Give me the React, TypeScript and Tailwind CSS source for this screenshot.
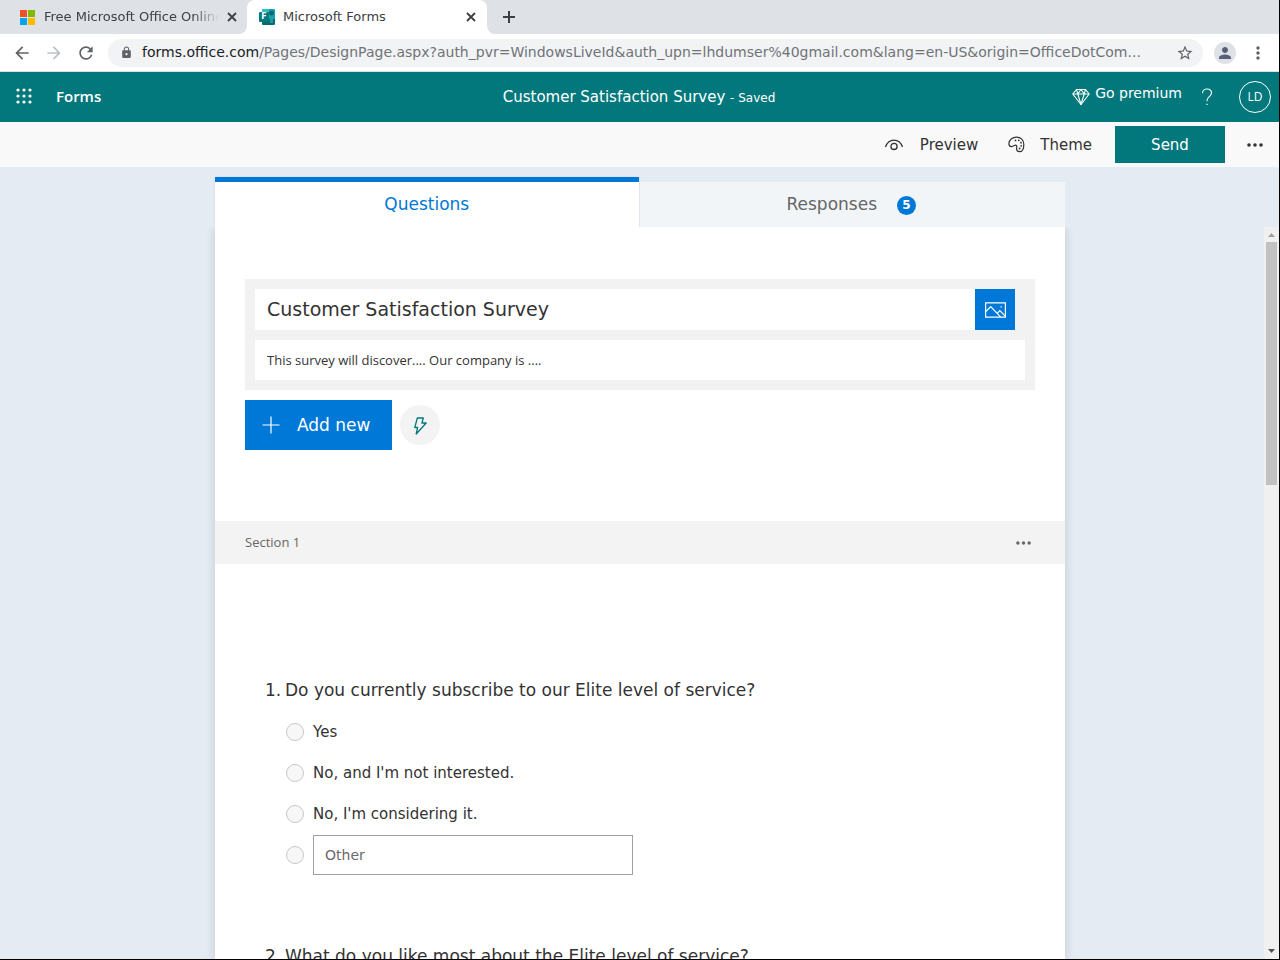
import React from "react";
import {
	MdArrowBack,
	MdArrowForward,
	MdLock,
	MdMoreVert,
	MdPerson,
	MdRefresh,
	MdStarBorder,
} from "react-icons/md";

const MicrosoftLogo = () => (
	<svg width="15" height="15" viewBox="0 0 15 15" className="shrink-0">
		<path fill="#f25022" d="M0 0h7v7H0z" />
		<path fill="#7fba00" d="M8 0h7v7H8z" />
		<path fill="#00a4ef" d="M0 8h7v7H0z" />
		<path fill="#ffb900" d="M8 8h7v7H8z" />
	</svg>
);

const FormsLogo = () => (
	<div className="relative h-4 w-4 shrink-0">
		<svg width="16" height="16" viewBox="0 0 16 16">
			<path fill="#14a5ab" d="M3 0h12a1 1 0 0 1 1 1v9H3z" />
			<path fill="#0b6a70" d="M3 10h13v5a1 1 0 0 1-1 1H4a1 1 0 0 1-1-1z" />
			<path fill="#32bec1" d="M3 0h7v4H3z" />
			<circle cx="12.5" cy="4" r="2.5" fill="#036c70" />
			<path fill="#1b9da2" d="M11 10h3v4h-3z" />
			<rect x="0" y="3" width="10" height="10" rx="1" fill="#047a80" />
		</svg>
		<span className="absolute top-[3px] left-0 w-[10px] text-center text-[8px] leading-[10px] font-bold text-white">F</span>
	</div>
);

const CloseIcon = () => (
	<svg width="14" height="14" viewBox="0 0 14 14" stroke="currentColor" strokeWidth="1.8">
		<path d="M3 3l8 8M11 3l-8 8" />
	</svg>
);

const NewTabIcon = () => (
	<svg width="20" height="20" viewBox="0 0 20 20" stroke="currentColor" strokeWidth="2">
		<path d="M10 4v12M4 10h12" />
	</svg>
);

const WaffleIcon = () => (
	<svg width="16" height="16" viewBox="0 0 16 16" fill="currentColor">
		{[2, 8, 14].map((y) => [2, 8, 14].map((x) => <circle key={`${x}-${y}`} cx={x} cy={y} r="1.6" />))}
	</svg>
);

const DiamondIcon = () => (
	<svg width="18" height="18" viewBox="0 0 18 18" fill="none" stroke="currentColor" strokeWidth="1.1" strokeLinejoin="round">
		<path d="M4.5 1.5h9l3.7 4.5L9 16.5.8 6z" />
		<path d="M.8 6h16.4M4.5 1.5 5.8 6 9 16.5 12.2 6l1.3-4.500M9 1.5 5.8 6M9 1.5 12.2 6" />
	</svg>
);

const HelpIcon = () => (
	<svg width="12" height="18" viewBox="0 0 12 18" fill="none" stroke="currentColor" strokeWidth="1.1">
		<path d="M1.5 5.2C1.5 2.6 3.4 1 6 1s4.5 1.6 4.5 4.1c0 3.2-4.5 4-4.5 7.4v.8" />
		<path d="M5.4 15.8h1.2v1.2H5.4z" fill="currentColor" stroke="none" />
	</svg>
);

const EyeIcon = () => (
	<svg width="20" height="12" viewBox="0 0 20 12" fill="none" stroke="currentColor" strokeWidth="1.3">
		<path d="M1.500 8C3 4 6 1.2 10 1.2S17 4 18.500 8" />
		<circle cx="10" cy="7.4" r="3.1" />
	</svg>
);

const PaletteIcon = () => (
	<svg width="17" height="17" viewBox="0 0 17 17" fill="none" stroke="currentColor" strokeWidth="1.2">
		<path d="M8.6 1.1c4.2 0 7.2 3 7.2 7.3 0 4.4-1.8 7.3-4.3 7.3-1.7 0-2.9-1-2.9-2.7 0-1.3.3-2.2.1-3-.3-.9-1.4-1.1-2.4-.5-1.1.7-1.8 1.200-3 1.100C1.600 10.400.9 9.300.9 7.700.9 4 4.400 1.100 8.600 1.100z" />
		<g fill="currentColor" stroke="none">
			<circle cx="7.5" cy="4.4" r=".9" />
			<circle cx="10.8" cy="4.3" r=".9" />
			<circle cx="13" cy="6.7" r=".9" />
			<circle cx="13.2" cy="9.8" r=".9" />
			<circle cx="11.6" cy="12.5" r=".9" />
		</g>
	</svg>
);

const PictureIcon = () => (
	<svg width="21" height="16" viewBox="0 0 21 16" fill="none" stroke="currentColor" strokeWidth="1.2">
		<path d="M.6.9h19.800v14.200H.6z" />
		<path d="M.8 9.500 5.700 4.600l9.800 10.200M12.300 11.400l2.500-2.800 5.500 5.600" />
		<path d="M15.500 4.200h1.300v1.200h-1.300z" fill="currentColor" stroke="none" />
	</svg>
);

const BoltIcon = () => (
	<svg width="14" height="19" viewBox="0 0 14 19" fill="none" stroke="currentColor" strokeWidth="1.3" strokeLinejoin="round">
		<path d="M4.300 2h6L8.900 7h4.300L3.200 18l1.400-6.500H1.800z" />
	</svg>
);

const PlusIcon = () => (
	<svg width="18" height="18" viewBox="0 0 18 18" stroke="currentColor" strokeWidth="1.2">
		<path d="M9 .5v17M.5 9h17" />
	</svg>
);

const DotsIcon = ({ width }: { width: number }) => (
	<svg width={width} height="4" viewBox="0 0 16 4" fill="currentColor">
		<circle cx="2" cy="2" r="1.8" />
		<circle cx="8" cy="2" r="1.8" />
		<circle cx="14" cy="2" r="1.8" />
	</svg>
);

function BrowserChrome() {
	return (
		<div className="shrink-0">
			<div className="flex h-[34px] bg-[#dee1e6] text-[13px] text-[#3c4043]">
				<div className="flex w-[247px] items-center pr-2 pl-5">
					<MicrosoftLogo />
					<span className="ml-[9px] w-[175px] overflow-hidden whitespace-nowrap [mask-image:linear-gradient(to_right,black_85%,transparent)]">
						Free Microsoft Office Online
					</span>
					<button aria-label="Close tab" className="ml-1.5">
						<CloseIcon />
					</button>
				</div>
				<div className="relative flex w-[240px] items-center rounded-t-lg bg-white pr-[9px] pl-3">
					<svg width="8" height="8" className="absolute bottom-0 -left-2" fill="white">
						<path d="M8 0v8H0a8 8 0 0 0 8-8z" />
					</svg>
					<svg width="8" height="8" className="absolute -right-2 bottom-0" fill="white">
						<path d="M0 0v8h8a8 8 0 0 1-8-8z" />
					</svg>
					<FormsLogo />
					<span className="ml-2 flex-1">Microsoft Forms</span>
					<button aria-label="Close tab">
						<CloseIcon />
					</button>
				</div>
				<button aria-label="New tab" className="ml-3">
					<NewTabIcon />
				</button>
			</div>
			<div className="flex h-[38px] items-center border-b border-[#dcdee2] bg-white px-3 text-[#5f6368]">
				<button aria-label="Back"><MdArrowBack size={20} /></button>
				<button aria-label="Forward" className="ml-3 text-[#bdc1c6]"><MdArrowForward size={20} /></button>
				<button aria-label="Reload" className="ml-3"><MdRefresh size={20} /></button>
				<div className="ml-3 flex h-7 min-w-0 flex-1 items-center rounded-full bg-[#f1f3f4] pr-[9px] pl-3">
					<MdLock size={13} className="shrink-0" />
					<p className="ml-[9px] min-w-0 flex-1 overflow-hidden text-[14px] text-ellipsis whitespace-nowrap text-[#707478]">
						<span className="text-[#202124]">forms.office.com</span>
						/Pages/DesignPage.aspx?auth_pvr=WindowsLiveId&amp;auth_upn=lhdumser%40gmail.com&amp;lang=en-US&amp;origin=OfficeDotCom...
					</p>
					<button aria-label="Bookmark"><MdStarBorder size={18} /></button>
				</div>
				<button aria-label="Profile" className="ml-[11px] flex h-[22px] w-[22px] items-center justify-center rounded-full bg-[#dee1e6] text-[#56607a]">
					<MdPerson size={18} />
				</button>
				<button aria-label="Browser menu" className="ml-3"><MdMoreVert size={20} /></button>
			</div>
		</div>
	);
}

function AppHeader() {
	return (
		<header className="grid h-[50px] shrink-0 grid-cols-[1fr_auto_1fr] items-center bg-[#03787c] text-[15px] text-white">
			<div className="flex items-center pb-0.5 pl-4">
				<button aria-label="App launcher"><WaffleIcon /></button>
				<a href="#" className="ml-6 font-['Open_Sans',sans-serif] font-semibold">Forms</a>
			</div>
			<p className="pr-0.5 whitespace-nowrap">
				Customer Satisfaction Survey <span className="text-[12px]">- Saved</span>
			</p>
			<div className="flex items-center justify-end pr-[9px]">
				<button className="flex items-center gap-[5px] text-[14px]">
					<DiamondIcon />
					<span className="pb-2">Go premium</span>
				</button>
				<button aria-label="Help" className="ml-[19px]"><HelpIcon /></button>
				<button className="ml-[26px] h-8 w-8 rounded-full border border-white font-['Open_Sans',sans-serif] text-[12px]">LD</button>
			</div>
		</header>
	);
}

function CommandBar() {
	return (
		<div className="flex h-[45px] shrink-0 items-center justify-end bg-[#f9f9f9] pr-[17px] text-[15px] text-[#333]">
			<button className="flex items-center gap-4">
				<EyeIcon />
				<span className="pt-0.5">Preview</span>
			</button>
			<button className="ml-[30px] flex items-center gap-[15px]">
				<PaletteIcon />
				<span className="pt-0.5">Theme</span>
			</button>
			<button className="ml-[23px] h-[37px] w-[110px] bg-[#03787c] pt-0.5 text-white">Send</button>
			<button aria-label="More options" className="ml-[22px]"><DotsIcon width={16} /></button>
		</div>
	);
}

interface QuestionProps {
	number: number;
	title: string;
	options?: string[];
}

function Question({ number, title, options = [] }: QuestionProps) {
	const name = `question-${number}`;
	return (
		<fieldset>
			<legend className="flex text-[17px] leading-6">
				<span className="w-5">{number}.</span>
				{title}
			</legend>
			{options.length > 0 && (
				<div className="mt-[10px] ml-[21px] grid gap-px text-[15px]">
					{options.map((option) => (
						<label key={option} className="flex h-10 items-center gap-[9px]">
							<input type="radio" name={name} className="h-[18px] w-[18px] appearance-none rounded-full border border-[#c8c8c8] bg-[#f7f7f7]" />
							{option}
						</label>
					))}
					<div className="flex h-10 items-center gap-[9px]">
						<input type="radio" name={name} aria-label="Other" className="h-[18px] w-[18px] appearance-none rounded-full border border-[#c8c8c8] bg-[#f7f7f7]" />
						<input type="text" aria-label="Other answer" placeholder="Other" className="h-10 w-80 border border-[#a0a0a0] px-[11px] text-[14px] placeholder:text-[#6a6a6a]" />
					</div>
				</div>
			)}
		</fieldset>
	);
}

function Scrollbar() {
	return (
		<div className="flex w-4 flex-col items-center justify-between bg-[#f0f0f0] pr-px pb-px">
			<div className="flex flex-col items-center">
				<svg width="15" height="15" viewBox="0 0 15 15" fill="#a0a0a0"><path d="M4 10 7.5 6 11 10z" /></svg>
				<div className="h-[243px] w-[11px] bg-[#c1c1c1]" />
			</div>
			<svg width="15" height="15" viewBox="0 0 15 15" fill="#505050"><path d="M4 5h7L7.5 9z" /></svg>
		</div>
	);
}

export default function App() {
	return (
		<div className="relative flex h-screen flex-col overflow-hidden bg-[#e4ebf2] font-['DejaVu_Sans',sans-serif] text-[#333]">
			<BrowserChrome />
			<AppHeader />
			<CommandBar />
			<nav className="mx-auto mt-[10px] flex h-[50px] w-full max-w-[850px] shrink-0 text-[17px]">
				<button className="flex-1 border-t-5 border-[#0078d7] bg-white text-[#0078d7] shadow-[0_0_2px_#0000001a]">Questions</button>
				<button className="mt-[5px] flex flex-1 items-center justify-center gap-5 border-l border-[#e0e6ec] bg-[#f1f5f8] pr-0.5 text-[#666]">
					Responses
					<span className="mt-0.5 h-[19px] w-[19px] rounded-full bg-[#0078d7] text-[12px] leading-[18px] font-bold text-white">5</span>
				</button>
			</nav>
			<main className="grid min-h-0 flex-1 grid-cols-[1fr_minmax(0,850px)_1fr] overflow-hidden">
				<div />
				<div className="overflow-hidden bg-white pt-[52px] shadow-[0_0_10px_#00000026]">
					<div className="px-[30px]">
						<div className="bg-[#f2f2f2] p-[10px]">
							<div className="flex pr-[10px]">
								<input aria-label="Form title" defaultValue="Customer Satisfaction Survey" className="h-[41px] min-w-0 flex-1 bg-white px-3 pb-0.5 text-[19px]" />
								<button aria-label="Insert image" className="flex w-10 items-center justify-center bg-[#0078d7] text-white">
									<PictureIcon />
								</button>
							</div>
							<input aria-label="Form description" defaultValue="This survey will discover.... Our company is ...." className="mt-[10px] block h-10 w-full bg-white px-3 font-['Open_Sans',sans-serif] text-[13px]" />
						</div>
						<div className="mt-[10px] flex items-center gap-2">
							<button className="flex h-[50px] w-[147px] items-center gap-[17px] bg-[#0078d7] pl-[17px] text-[17px] text-white">
								<PlusIcon />
								<span className="pt-0.5">Add new</span>
							</button>
							<button aria-label="Quick suggestions" className="flex h-10 w-10 items-center justify-center rounded-full bg-[#f3f3f3] text-[#03787c]">
								<BoltIcon />
							</button>
						</div>
					</div>
					<div className="mt-[71px] flex h-[43px] items-center justify-between bg-[#f3f3f3] pt-px pr-[34px] pl-[30px] font-['Open_Sans',sans-serif] text-[13px] text-[#666]">
						<h2>Section 1</h2>
						<button aria-label="Section options"><DotsIcon width={15} /></button>
					</div>
					<div className="mt-[114px] flex flex-col gap-[69px] px-[50px]">
						<Question
							number={1}
							title="Do you currently subscribe to our Elite level of service?"
							options={["Yes", "No, and I'm not interested.", "No, I'm considering it."]}
						/>
						<Question number={2} title="What do you like most about the Elite level of service?" />
					</div>
				</div>
				<div className="flex justify-end">
					<Scrollbar />
				</div>
			</main>
			{/* window edge */}
			<div className="pointer-events-none absolute inset-x-0 top-0 bottom-0 border-r border-b border-black" />
		</div>
	);
}
